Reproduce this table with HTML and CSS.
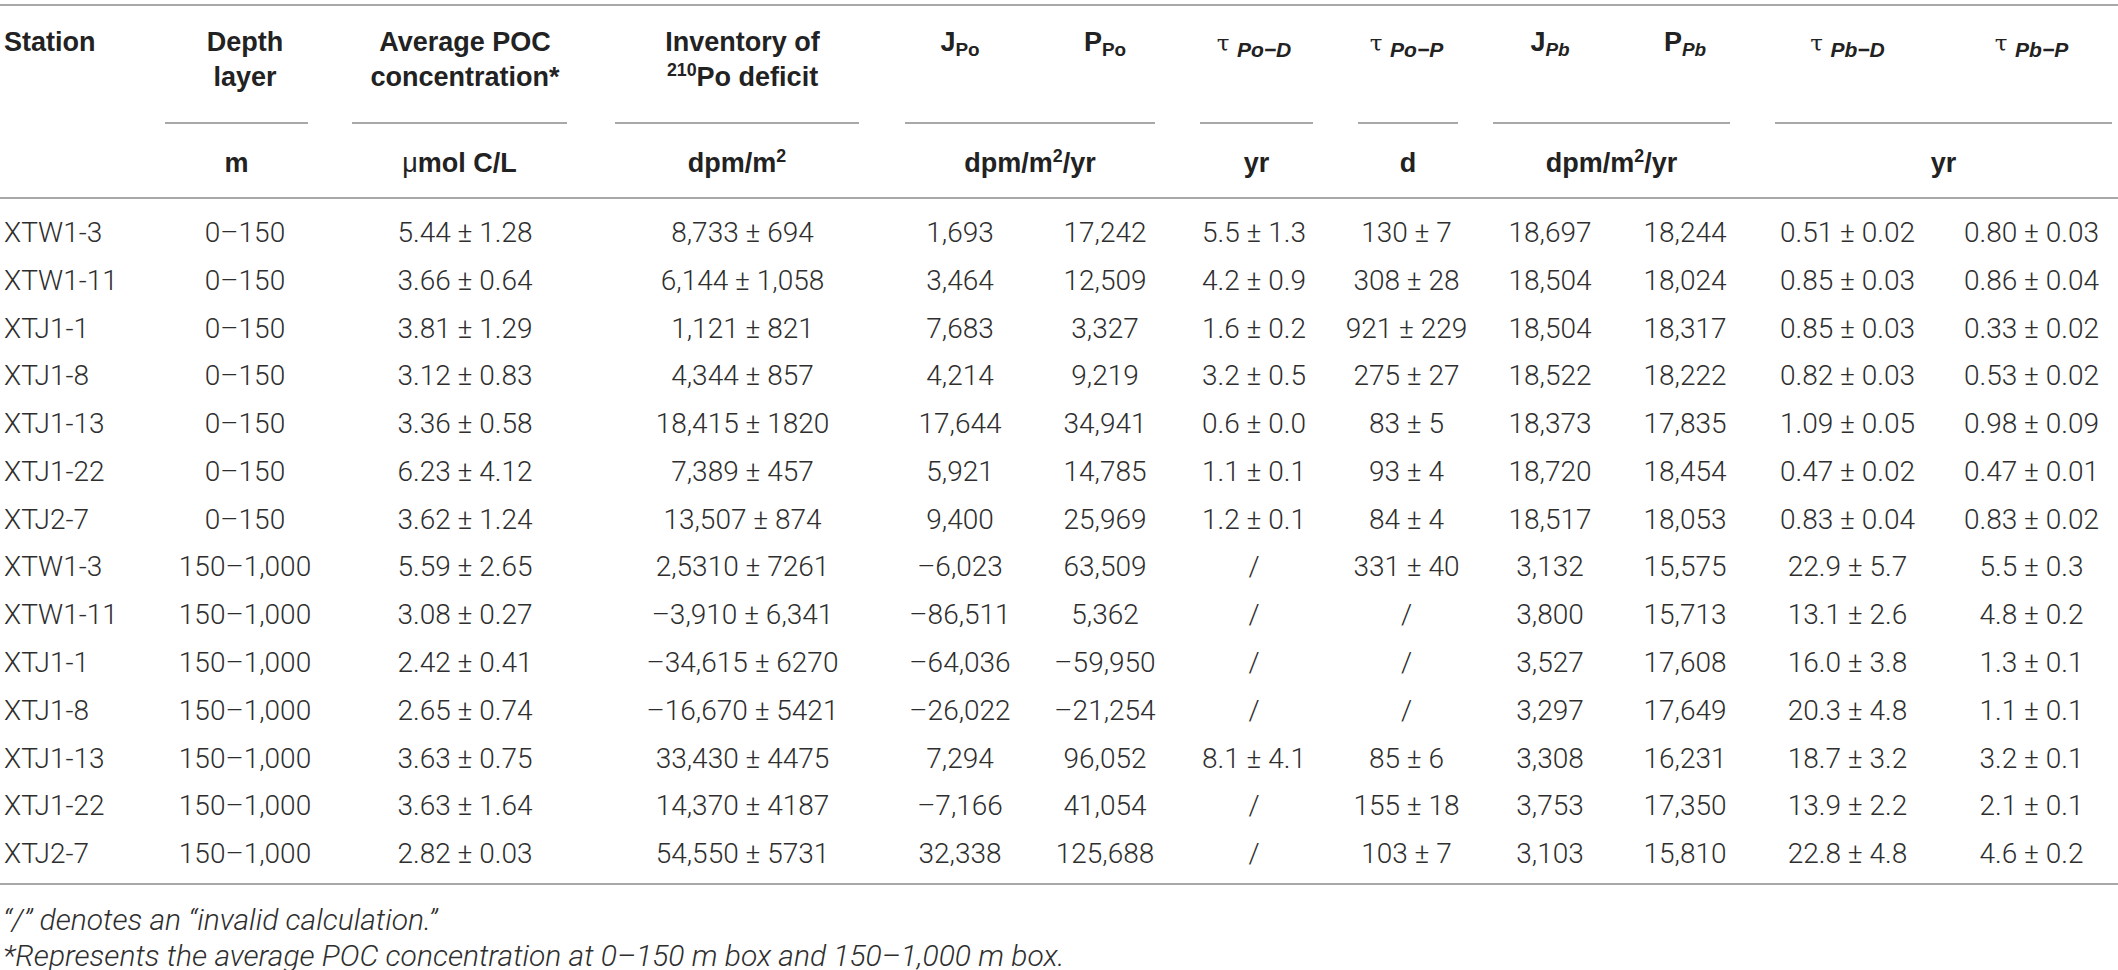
FILE: index.html
```html
<!DOCTYPE html>
<html lang="en">
<head>
  <meta charset="UTF-8">
  <title>Po and Pb fluxes table</title>
  <link rel="stylesheet" href="styles.css">
</head>
<body>
  <table class="data-table">
    <colgroup>
      <col class="c-station">
      <col class="c-depth">
      <col class="c-poc">
      <col class="c-inv">
      <col class="c-jpo">
      <col class="c-ppo">
      <col class="c-tpod">
      <col class="c-tpop">
      <col class="c-jpb">
      <col class="c-ppb">
      <col class="c-tpbd">
      <col class="c-tpbp">
    </colgroup>
    <thead>
      <tr class="head-names">
        <th class="left">Station</th>
        <th>Depth<br>layer</th>
        <th>Average POC<br>concentration*</th>
        <th>Inventory of<br><sup>210</sup>Po deficit</th>
        <th>J<sub>Po</sub></th>
        <th>P<sub>Po</sub></th>
        <th><span class="tau">τ</span> <sub class="tsub">Po−D</sub></th>
        <th><span class="tau">τ</span> <sub class="tsub">Po−P</sub></th>
        <th>J<sub class="it">Pb</sub></th>
        <th>P<sub class="it">Pb</sub></th>
        <th><span class="tau">τ</span> <sub class="tsub">Pb−D</sub></th>
        <th><span class="tau">τ</span> <sub class="tsub">Pb−P</sub></th>
      </tr>
      <tr class="head-units">
        <th></th>
        <th><div class="unit u-depth">m</div></th>
        <th><div class="unit u-poc"><span class="mu">μ</span>mol C/L</div></th>
        <th><div class="unit u-inv">dpm/m<sup>2</sup></div></th>
        <th colspan="2"><div class="unit u-po">dpm/m<sup>2</sup>/yr</div></th>
        <th><div class="unit u-tpod">yr</div></th>
        <th><div class="unit u-tpop">d</div></th>
        <th colspan="2"><div class="unit u-pb">dpm/m<sup>2</sup>/yr</div></th>
        <th colspan="2"><div class="unit u-tpb">yr</div></th>
      </tr>
    </thead>
    <tbody>
      <tr><td class="left">XTW1-3</td><td>0–150</td><td>5.44 ± 1.28</td><td>8,733 ± 694</td><td>1,693</td><td>17,242</td><td>5.5 ± 1.3</td><td>130 ± 7</td><td>18,697</td><td>18,244</td><td>0.51 ± 0.02</td><td>0.80 ± 0.03</td></tr>
      <tr><td class="left">XTW1-11</td><td>0–150</td><td>3.66 ± 0.64</td><td>6,144 ± 1,058</td><td>3,464</td><td>12,509</td><td>4.2 ± 0.9</td><td>308 ± 28</td><td>18,504</td><td>18,024</td><td>0.85 ± 0.03</td><td>0.86 ± 0.04</td></tr>
      <tr><td class="left">XTJ1-1</td><td>0–150</td><td>3.81 ± 1.29</td><td>1,121 ± 821</td><td>7,683</td><td>3,327</td><td>1.6 ± 0.2</td><td>921 ± 229</td><td>18,504</td><td>18,317</td><td>0.85 ± 0.03</td><td>0.33 ± 0.02</td></tr>
      <tr><td class="left">XTJ1-8</td><td>0–150</td><td>3.12 ± 0.83</td><td>4,344 ± 857</td><td>4,214</td><td>9,219</td><td>3.2 ± 0.5</td><td>275 ± 27</td><td>18,522</td><td>18,222</td><td>0.82 ± 0.03</td><td>0.53 ± 0.02</td></tr>
      <tr><td class="left">XTJ1-13</td><td>0–150</td><td>3.36 ± 0.58</td><td>18,415 ± 1820</td><td>17,644</td><td>34,941</td><td>0.6 ± 0.0</td><td>83 ± 5</td><td>18,373</td><td>17,835</td><td>1.09 ± 0.05</td><td>0.98 ± 0.09</td></tr>
      <tr><td class="left">XTJ1-22</td><td>0–150</td><td>6.23 ± 4.12</td><td>7,389 ± 457</td><td>5,921</td><td>14,785</td><td>1.1 ± 0.1</td><td>93 ± 4</td><td>18,720</td><td>18,454</td><td>0.47 ± 0.02</td><td>0.47 ± 0.01</td></tr>
      <tr><td class="left">XTJ2-7</td><td>0–150</td><td>3.62 ± 1.24</td><td>13,507 ± 874</td><td>9,400</td><td>25,969</td><td>1.2 ± 0.1</td><td>84 ± 4</td><td>18,517</td><td>18,053</td><td>0.83 ± 0.04</td><td>0.83 ± 0.02</td></tr>
      <tr><td class="left">XTW1-3</td><td>150–1,000</td><td>5.59 ± 2.65</td><td>2,5310 ± 7261</td><td>–6,023</td><td>63,509</td><td>/</td><td>331 ± 40</td><td>3,132</td><td>15,575</td><td>22.9 ± 5.7</td><td>5.5 ± 0.3</td></tr>
      <tr><td class="left">XTW1-11</td><td>150–1,000</td><td>3.08 ± 0.27</td><td>–3,910 ± 6,341</td><td>–86,511</td><td>5,362</td><td>/</td><td>/</td><td>3,800</td><td>15,713</td><td>13.1 ± 2.6</td><td>4.8 ± 0.2</td></tr>
      <tr><td class="left">XTJ1-1</td><td>150–1,000</td><td>2.42 ± 0.41</td><td>–34,615 ± 6270</td><td>–64,036</td><td>–59,950</td><td>/</td><td>/</td><td>3,527</td><td>17,608</td><td>16.0 ± 3.8</td><td>1.3 ± 0.1</td></tr>
      <tr><td class="left">XTJ1-8</td><td>150–1,000</td><td>2.65 ± 0.74</td><td>–16,670 ± 5421</td><td>–26,022</td><td>–21,254</td><td>/</td><td>/</td><td>3,297</td><td>17,649</td><td>20.3 ± 4.8</td><td>1.1 ± 0.1</td></tr>
      <tr><td class="left">XTJ1-13</td><td>150–1,000</td><td>3.63 ± 0.75</td><td>33,430 ± 4475</td><td>7,294</td><td>96,052</td><td>8.1 ± 4.1</td><td>85 ± 6</td><td>3,308</td><td>16,231</td><td>18.7 ± 3.2</td><td>3.2 ± 0.1</td></tr>
      <tr><td class="left">XTJ1-22</td><td>150–1,000</td><td>3.63 ± 1.64</td><td>14,370 ± 4187</td><td>–7,166</td><td>41,054</td><td>/</td><td>155 ± 18</td><td>3,753</td><td>17,350</td><td>13.9 ± 2.2</td><td>2.1 ± 0.1</td></tr>
      <tr><td class="left">XTJ2-7</td><td>150–1,000</td><td>2.82 ± 0.03</td><td>54,550 ± 5731</td><td>32,338</td><td>125,688</td><td>/</td><td>103 ± 7</td><td>3,103</td><td>15,810</td><td>22.8 ± 4.8</td><td>4.6 ± 0.2</td></tr>
    </tbody>
  </table>
  <div class="notes">
    <p>“/” denotes an “invalid calculation.”</p>
    <p>*Represents the average POC concentration at 0–150 m box and 150–1,000 m box.</p>
  </div>
</body>
</html>
```

FILE: styles.css
```css
body {
  margin: 0;
  padding-top: 4px;
  background: #fff;
  color: #2e2e2e;
  font-family: Roboto, "Liberation Sans", sans-serif;
}

.data-table {
  width: 2118px;
  table-layout: fixed;
  border-collapse: collapse;
  border-top: 2px solid #a8a8a8;
  border-bottom: 2px solid #a8a8a8;
  font-size: 28px;
}

.c-station { width: 160px; }
.c-depth { width: 170px; }
.c-poc { width: 270px; }
.c-inv { width: 285px; }
.c-jpo { width: 150px; }
.c-ppo { width: 140px; }
.c-tpod { width: 158px; }
.c-tpop { width: 147px; }
.c-jpb { width: 140px; }
.c-ppb { width: 130px; }
.c-tpbd { width: 195px; }
.c-tpbp { width: 173px; }

th, td {
  padding: 0;
  text-align: center;
  white-space: nowrap;
}

th {
  font-family: "Liberation Sans", Arial, sans-serif;
  font-size: 27px;
  font-weight: bold;
  color: #222;
}

.left {
  text-align: left;
  padding-left: 4px;
}

.head-names th {
  vertical-align: top;
  line-height: 35px;
  padding-top: 19px;
  padding-bottom: 27px;
}

.head-units th {
  line-height: 36px;
  padding-bottom: 16px;
}

.head-units {
  border-bottom: 2px solid #a8a8a8;
}

.unit {
  border-top: 2px solid #a8a8a8;
  margin: 0 20px;
  padding-top: 21px;
}

.u-depth { margin: 0 22px 0 5px; }
.u-poc { margin: 0 33px 0 22px; }
.u-inv { margin: 0 26px 0 15px; }
.u-tpod { margin: 0 20px 0 25px; }
.u-tpop { margin: 0 22px 0 25px; }
.u-pb { margin: 0 20px 0 13px; }
.u-tpb { margin: 0 6px 0 25px; }

.mu {
  font-weight: normal;
}

sup {
  font-size: 0.66em;
  line-height: 0;
  vertical-align: 0.55em;
}

sub {
  font-size: 0.7em;
  line-height: 0;
  vertical-align: -0.25em;
}

.it {
  font-style: italic;
}

.tau {
  font-weight: normal;
  font-family: "DejaVu Serif", serif;
  font-size: 0.85em;
}

.tsub {
  font-style: italic;
  font-size: 0.78em;
  vertical-align: -0.3em;
}

tbody td {
  font-weight: 300;
  line-height: 36px;
  padding-top: 5.9px;
  padding-bottom: 5.9px;
}

tbody tr:first-child td {
  padding-top: 16px;
}

tbody tr:last-child td {
  padding-bottom: 11px;
}

.notes {
  padding-top: 17px;
  padding-left: 3px;
  font-size: 30px;
  font-weight: 300;
  font-style: italic;
}

.notes p {
  margin: 0;
  line-height: 36px;
}
```
